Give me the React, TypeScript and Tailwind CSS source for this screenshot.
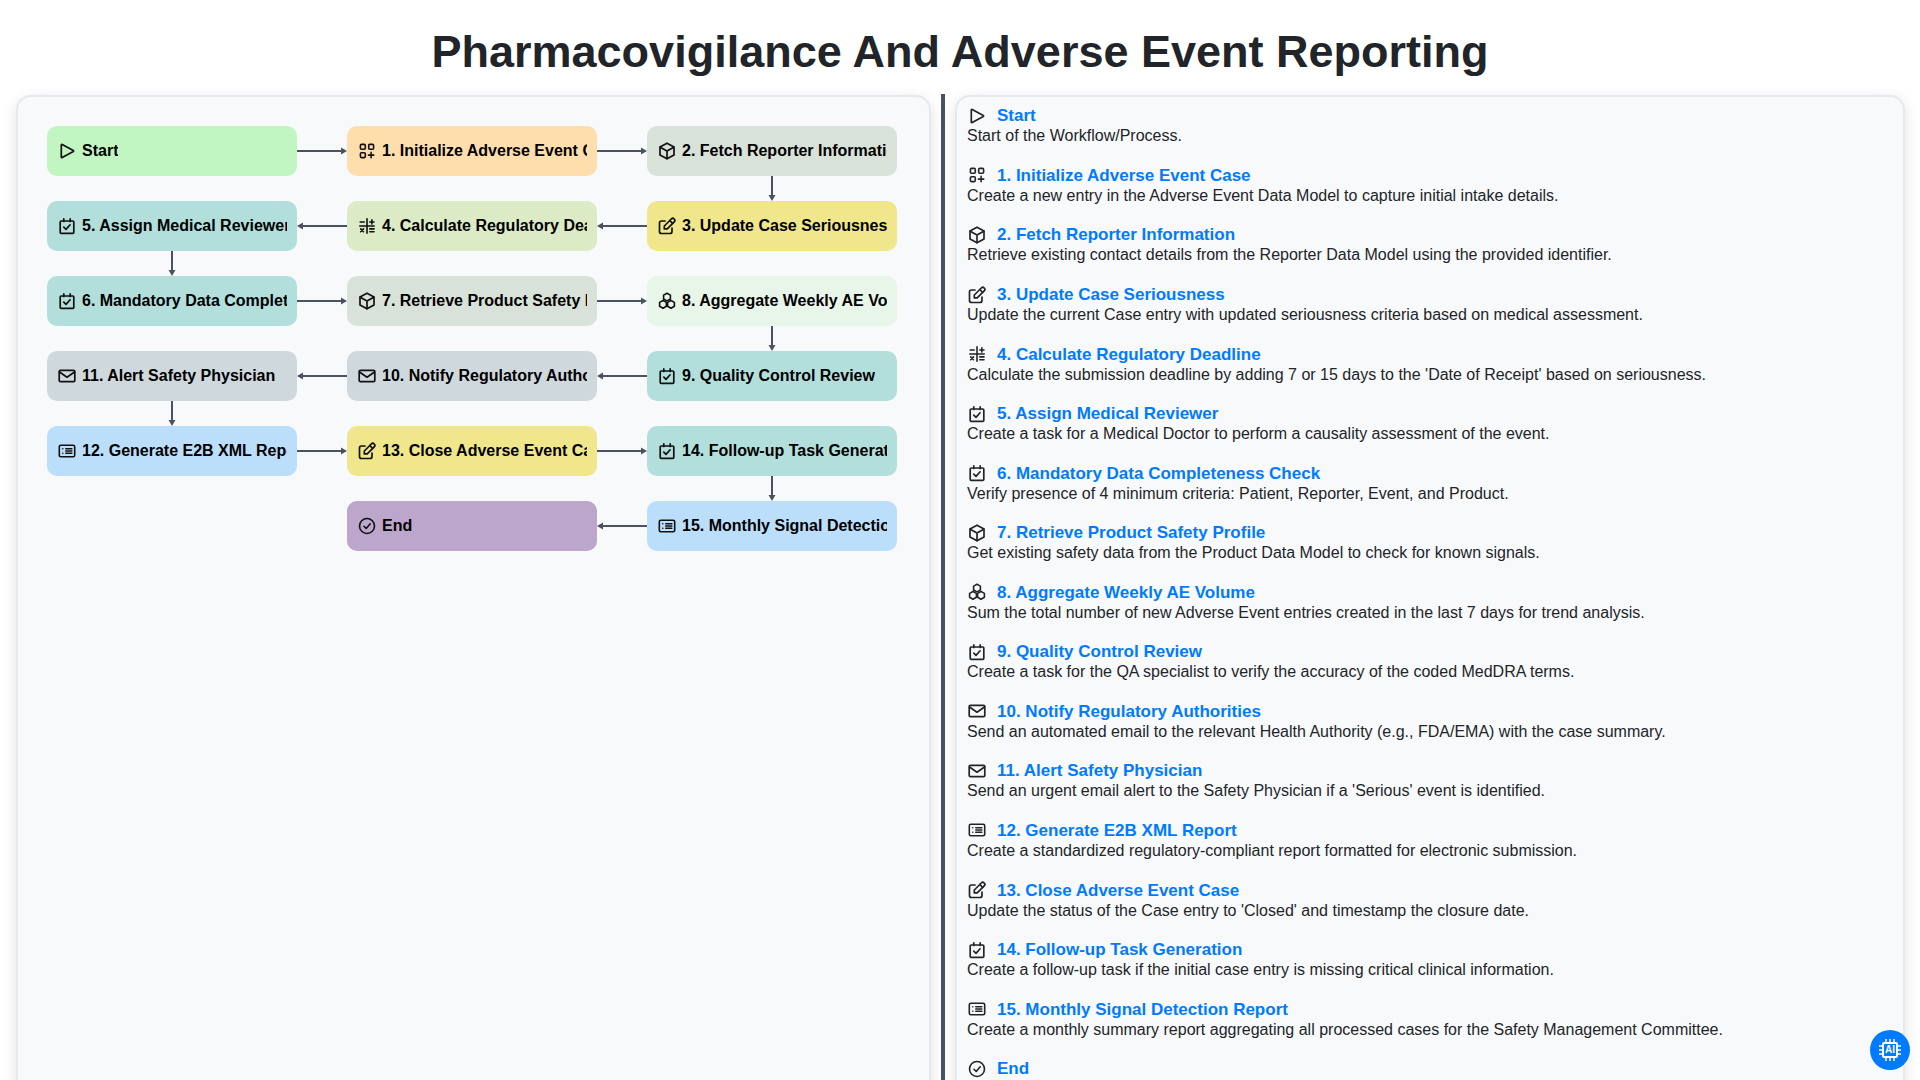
import type { ReactNode } from "react";

type IconProps = { className?: string };

// icons drawn on a 20px box, stroke weights read from the screenshot
const Svg = ({ className, children, sw = 1.7 }: IconProps & { children: ReactNode; sw?: number }) => (
  <svg width="20" height="20" viewBox="0 0 20 20" fill="none" stroke="currentColor" strokeWidth={sw} strokeLinecap="round" strokeLinejoin="round" className={className}>
    {children}
  </svg>
);

const PlayIcon = (p: IconProps) => (
  <Svg {...p}>
    <path d="M4.300 3.900a.6.6 0 0 1 .9-.5l11.100 6.100a.6.6 0 0 1 0 1L5.200 16.600a.6.6 0 0 1-.9-.5z" />
  </Svg>
);
const CategoryIcon = (p: IconProps) => (
  <Svg {...p} sw={1.6}>
    <rect x="3.400" y="3.400" width="4.900" height="4.900" rx="1" />
    <rect x="11.700" y="3.400" width="4.900" height="4.900" rx="1" />
    <rect x="3.400" y="11.700" width="4.900" height="4.900" rx="1" />
    <path d="M11.400 14.100h5.400M14.100 11.400v5.400" />
  </Svg>
);
const CubeIcon = (p: IconProps) => (
  <Svg {...p}>
    <path d="M10 2.200l7 3.900v7.800l-7 3.900-7-3.900V6.100z" />
    <path d="M3.200 6.200L10 10l6.800-3.800M10 10v7.600" />
  </Svg>
);
const EditIcon = (p: IconProps) => (
  <Svg {...p}>
    <path d="M8 5H4.500a2 2 0 0 0-2 2v8.500a2 2 0 0 0 2 2H13a2 2 0 0 0 2-2V12" />
    <path d="M17.200 5.900a2 2 0 0 0-2.900-2.900L7.300 10v2.900h2.900z" />
    <path d="M12.800 4.500l2.800 2.800" />
  </Svg>
);
const MathIcon = (p: IconProps) => (
  <Svg {...p} sw={1.6}>
    <path d="M10 2.800v14.400M2.800 10h14.400" />
    <path d="M3.200 6h4" />
    <path d="M12.800 6h4.200M14.900 3.900v4.200" />
    <path d="M3.700 12.900l2.800 2.800M6.500 12.900l-2.800 2.800" />
    <path d="M12.800 12.900h4.200M12.800 15.700h4.200" />
  </Svg>
);
const TaskIcon = (p: IconProps) => (
  <Svg {...p}>
    <rect x="3.200" y="5" width="13.600" height="12.300" rx="1" />
    <path d="M6.800 2.900v2.500M13.200 2.900v2.500" />
    <path d="M6.800 11.200l2.200 2.200 4.100-4.600" />
  </Svg>
);
const HexIcon = (p: IconProps) => (
  <Svg {...p} sw={1.6}>
    <path d="M10 2.200l3.400 1.900v3.900L10 9.900 6.600 8V4.100z" />
    <path d="M6 9.500l3.400 1.900v3.900L6 17.200l-3.400-1.900v-3.900z" />
    <path d="M14 9.500l3.400 1.900v3.900L14 17.200l-3.400-1.900v-3.900z" />
  </Svg>
);
const MailIcon = (p: IconProps) => (
  <Svg {...p}>
    <rect x="2.200" y="4.400" width="15.600" height="11.200" rx="1.200" />
    <path d="M2.500 6l7.500 5.200L17.500 6" />
  </Svg>
);
const ListIcon = (p: IconProps) => (
  <Svg {...p} sw={1.6}>
    <rect x="2.300" y="4.300" width="15.400" height="11.400" rx="1.500" />
    <path d="M5.800 7.700h.01M5.800 12.300h.01M8.800 7.700h6M8.800 10h6M8.800 12.300h6" />
  </Svg>
);
const CheckCircleIcon = (p: IconProps) => (
  <Svg {...p} sw={1.6}>
    <circle cx="10" cy="10" r="7.500" />
    <path d="M7 10.300l2.200 2.200 4-4.700" />
  </Svg>
);

const steps = [
  { key: "s", title: "Start", desc: "Start of the Workflow/Process.", icon: PlayIcon, color: "bg-[#c1f5c1]" },
  { key: "1", title: "1. Initialize Adverse Event Case", desc: "Create a new entry in the Adverse Event Data Model to capture initial intake details.", icon: CategoryIcon, color: "bg-[#ffdead]" },
  { key: "2", title: "2. Fetch Reporter Information", desc: "Retrieve existing contact details from the Reporter Data Model using the provided identifier.", icon: CubeIcon, color: "bg-[#d8e2d9]" },
  { key: "3", title: "3. Update Case Seriousness", desc: "Update the current Case entry with updated seriousness criteria based on medical assessment.", icon: EditIcon, color: "bg-[#f0e68c]" },
  { key: "4", title: "4. Calculate Regulatory Deadline", desc: "Calculate the submission deadline by adding 7 or 15 days to the 'Date of Receipt' based on seriousness.", icon: MathIcon, color: "bg-[#dcebc5]" },
  { key: "5", title: "5. Assign Medical Reviewer", desc: "Create a task for a Medical Doctor to perform a causality assessment of the event.", icon: TaskIcon, color: "bg-[#b2dfdb]" },
  { key: "6", title: "6. Mandatory Data Completeness Check", desc: "Verify presence of 4 minimum criteria: Patient, Reporter, Event, and Product.", icon: TaskIcon, color: "bg-[#b2dfdb]" },
  { key: "7", title: "7. Retrieve Product Safety Profile", desc: "Get existing safety data from the Product Data Model to check for known signals.", icon: CubeIcon, color: "bg-[#d8e2d9]" },
  { key: "8", title: "8. Aggregate Weekly AE Volume", desc: "Sum the total number of new Adverse Event entries created in the last 7 days for trend analysis.", icon: HexIcon, color: "bg-[#e8f5e9]" },
  { key: "9", title: "9. Quality Control Review", desc: "Create a task for the QA specialist to verify the accuracy of the coded MedDRA terms.", icon: TaskIcon, color: "bg-[#b2dfdb]" },
  { key: "10", title: "10. Notify Regulatory Authorities", desc: "Send an automated email to the relevant Health Authority (e.g., FDA/EMA) with the case summary.", icon: MailIcon, color: "bg-[#cfd8dc]" },
  { key: "11", title: "11. Alert Safety Physician", desc: "Send an urgent email alert to the Safety Physician if a 'Serious' event is identified.", icon: MailIcon, color: "bg-[#cfd8dc]" },
  { key: "12", title: "12. Generate E2B XML Report", desc: "Create a standardized regulatory-compliant report formatted for electronic submission.", icon: ListIcon, color: "bg-[#bbdefb]" },
  { key: "13", title: "13. Close Adverse Event Case", desc: "Update the status of the Case entry to 'Closed' and timestamp the closure date.", icon: EditIcon, color: "bg-[#f0e68c]" },
  { key: "14", title: "14. Follow-up Task Generation", desc: "Create a follow-up task if the initial case entry is missing critical clinical information.", icon: TaskIcon, color: "bg-[#b2dfdb]" },
  { key: "15", title: "15. Monthly Signal Detection Report", desc: "Create a monthly summary report aggregating all processed cases for the Safety Management Committee.", icon: ListIcon, color: "bg-[#bbdefb]" },
  { key: "e", title: "End", desc: "", icon: CheckCircleIcon, color: "bg-[#bca6cc]" },
];

const byKey = (key: string) => steps.find((s) => s.key === key)!;

const Arrow = ({ dir }: { dir: "right" | "left" | "down" }) => {
  if (dir === "down") {
    return (
      <svg width="12" height="25" viewBox="0 0 12 25" className="mx-auto block text-[#4b5260]">
        <path d="M6 0v19" stroke="currentColor" strokeWidth="2" />
        <path d="M2.500 19h7L6 25z" fill="currentColor" />
      </svg>
    );
  }
  return (
    <div className="flex h-full items-center">
      <svg width="50" height="12" viewBox="0 0 50 12" className={dir === "left" ? "block rotate-180 text-[#4b5260]" : "block text-[#4b5260]"}>
        <path d="M0 6h44" stroke="currentColor" strokeWidth="2" />
        <path d="M44 2.500v7L50 6z" fill="currentColor" />
      </svg>
    </div>
  );
};

const Node = ({ id }: { id: string }) => {
  const step = byKey(id);
  const Icon = step.icon;
  return (
    <div className={`flex h-[50px] w-[250px] items-center rounded-[10px] px-[10px] text-black ${step.color}`}>
      <Icon className="mr-[5px] shrink-0 text-[#111]" />
      <span className="overflow-hidden whitespace-nowrap text-base font-bold">{step.title}</span>
    </div>
  );
};

// rows of the flow: node, link, node, link, node
const flow: string[][] = [
  ["s", ">", "1", ">", "2"],
  ["", "", "", "", "v"],
  ["5", "<", "4", "<", "3"],
  ["v", "", "", "", ""],
  ["6", ">", "7", ">", "8"],
  ["", "", "", "", "v"],
  ["11", "<", "10", "<", "9"],
  ["v", "", "", "", ""],
  ["12", ">", "13", ">", "14"],
  ["", "", "", "", "v"],
  ["", "", "e", "<", "15"],
];

const Cell = ({ value }: { value: string }) => {
  if (value === "") return <div />;
  if (value === ">") return <Arrow dir="right" />;
  if (value === "<") return <Arrow dir="left" />;
  if (value === "v") return <Arrow dir="down" />;
  return <Node id={value} />;
};

const Chip = () => (
  <div className="absolute bottom-[10px] right-[10px] flex h-10 w-10 items-center justify-center rounded-full bg-[#007bff] text-white">
    <div className="relative flex h-6 w-6 items-center justify-center">
      <svg width="24" height="24" viewBox="0 0 24 24" fill="none" stroke="currentColor" strokeWidth="2" className="absolute inset-0">
        <rect x="5" y="5" width="14" height="14" rx="1" />
        <path d="M8 1v3M12 1v3M16 1v3M8 20v3M12 20v3M16 20v3M1 8h3M1 12h3M1 16h3M20 8h3M20 12h3M20 16h3" strokeWidth="1.500" />
      </svg>
      <span className="relative text-[10px] leading-none font-bold">AI</span>
    </div>
  </div>
);

export default function App() {
  return (
    <div className="relative h-screen overflow-hidden bg-white font-['Liberation_Sans',Arial,sans-serif] text-[#212529]">
      <h1 className="h-[94px] pt-[26px] text-center text-[45px] leading-[52px] font-bold">
        Pharmacovigilance And Adverse Event Reporting
      </h1>
      <div className="flex h-[986px] pl-4 pr-[15px]">
        <div className="mt-px h-[1100px] w-[915px] shrink-0 rounded-t-[15px] border-2 border-[#e7e8ee] bg-[#f8f9fb] p-[29px] shadow-[0_4px_15px_rgba(0,0,0,0.12)]">
          <div className="grid grid-cols-[250px_50px_250px_50px_250px] grid-rows-[50px_25px_50px_25px_50px_25px_50px_25px_50px_25px_50px]">
            {flow.flatMap((row, r) => row.map((value, c) => <Cell key={`${r}-${c}`} value={value} />))}
          </div>
        </div>
        <div className="mx-[10px] h-full w-1 shrink-0 bg-[#4a5068]" />
        <div className="mt-px h-[1100px] min-w-0 flex-1 rounded-t-[15px] border-2 border-[#e7e8ee] bg-[#f8f9fb] pr-[9px] pl-[10px] pt-[8.4px] shadow-[0_4px_15px_rgba(0,0,0,0.12)]">
          {steps.map((step) => {
            const Icon = step.icon;
            return (
              <div key={step.key} className="h-[59.55px]">
                <div className="flex h-[21px] items-center">
                  <Icon className="mr-[10px] shrink-0 text-[#212529]" />
                  <span className="text-[17px] leading-[21px] font-bold text-[#007bff]">{step.title}</span>
                </div>
                <p className="text-base leading-[20px]">{step.desc}</p>
              </div>
            );
          })}
        </div>
      </div>
      <Chip />
    </div>
  );
}
